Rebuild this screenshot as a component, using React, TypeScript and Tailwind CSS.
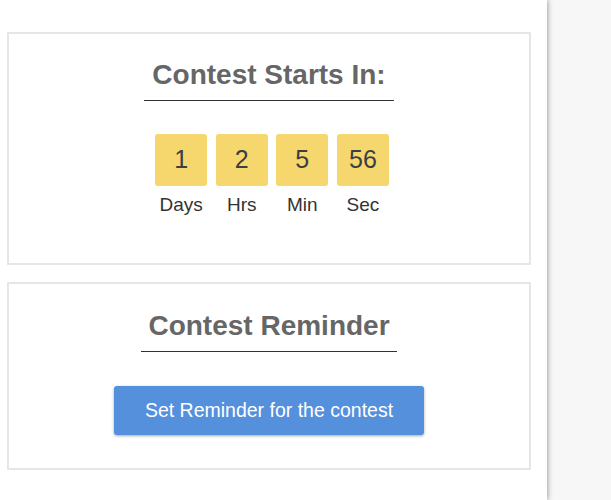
import React from "react";

const units = [
  { v: "1", l: "Days" },
  { v: "2", l: "Hrs" },
  { v: "5", l: "Min" },
  { v: "56", l: "Sec" },
];

export default function App() {
  return (
    <div
      className="flex h-[500px] w-[611px] overflow-hidden bg-[#f7f7f7]"
      style={{ fontFamily: '"Liberation Sans", Arial, Helvetica, sans-serif' }}
    >
      <div className="relative z-10 flex h-full w-[547px] shrink-0 flex-col gap-[17px] bg-white pl-[7px] pr-[16px] pt-[32px] shadow-[1px_0_5px_rgba(0,0,0,0.35)]">
        <section className="flex flex-col items-center border-2 border-[#e6e6e6] pb-[48px] pt-[25px]">
          <h2 className="border-b border-[#333] px-[8px] pb-[9px] text-[28px] font-bold leading-[32px] text-[#666]">
            Contest Starts In:
          </h2>
          <div className="mt-[33px] flex gap-[8.6px] pl-[6px]">
            {units.map((u) => (
              <div key={u.l} className="flex w-[52px] flex-col items-center">
                <div className="flex h-[52px] w-[52px] items-center justify-center rounded-[3px] bg-[#f5d76e] text-[25px] text-[#3a3e45]">
                  {u.v}
                </div>
                <div className="mt-[8px] text-[19px] leading-[21px] text-[#333]">{u.l}</div>
              </div>
            ))}
          </div>
        </section>
        <section className="flex flex-col items-center border-2 border-[#e6e6e6] pb-[33px] pt-[26px]">
          <h2 className="border-b border-[#333] px-[7px] pb-[9px] text-[28px] font-bold leading-[32px] text-[#666]">
            Contest Reminder
          </h2>
          <button className="mt-[34px] flex h-[49px] w-[310px] items-center justify-center rounded-[3px] bg-[#5590dd] text-[19.5px] text-white shadow-[0_1px_3px_rgba(0,0,0,0.35)]">
            Set Reminder for the contest
          </button>
        </section>
      </div>
      <div className="flex-1" />
    </div>
  );
}
